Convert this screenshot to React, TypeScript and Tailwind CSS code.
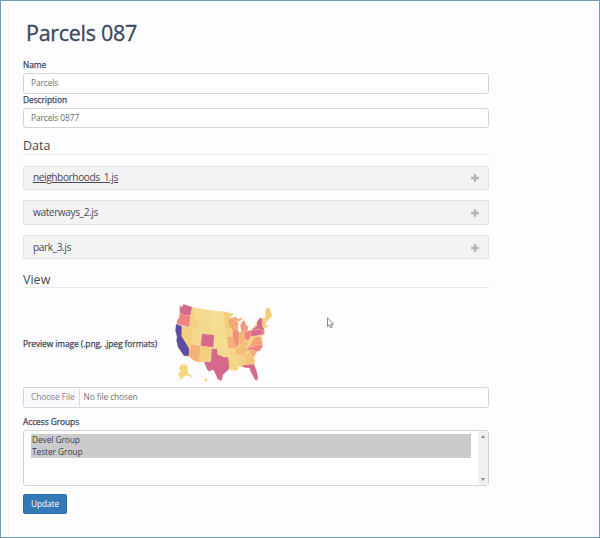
import React from "react";

const shapes: { fill: string; points: string }[] = [
  // Mainland base
  { fill: "#f4d98c", points: "82,37 130,45 180,51 186,49 189,54 206,57 196,66 200,69 211,66 220,73 204,80 206,98 210,109 222,112 238,110 250,108 262,102 276,82 285,70 292,70 302,67 301,52 305,39 313,38 318,55 321,63 311,73 304,80 302,94 311,93 300,99 294,107 290,122 293,138 292,153 282,166 270,179 268,194 269,211 238,211 215,216 218,226 204,224 193,222 140,202 106,201 92,198 72,184 60,150 50,122 50,100 74,98" },
  // Washington, Oregon, California
  { fill: "#d5698b", points: "44,30 50,37 55,30 54,27 82,36 77,61 56,61 44,53" },
  { fill: "#ee8481", points: "44,54 56,61 77,61 73,97 35,87 37,75 43,65" },
  { fill: "#5c4ca2", points: "33,87 54,94 50,123 72,160 73,172 71,184 56,182 49,171 39,157 34,136 36,126 31,107" },
  // Idaho, Montana, Wyoming
  { fill: "#f4cf7e", points: "82,37 86,38 86,52 95,77 105,79 102,104 73,97 77,61" },
  { fill: "#f3da90", points: "86,38 140,47 136,81 95,77 86,52" },
  { fill: "#efda8f", points: "105,79 141,83 138,116 102,112" },
  // Nevada, Utah, Arizona, New Mexico, Colorado
  { fill: "#f5cf81", points: "50,92 87,101 81,147 75,158 50,123" },
  { fill: "#f4d98d", points: "87,101 102,104 102,114 111,116 107,153 80,147" },
  { fill: "#f4b278", points: "80,147 107,153 103,202 89,198 71,185 75,160" },
  { fill: "#f5ce82", points: "107,153 141,157 138,199 103,202" },
  { fill: "#d5698b", points: "111,116 148,120 145,157 107,152" },
  // Dakotas to Oklahoma
  { fill: "#f2e095", points: "139,47 176,50 178,79 137,77" },
  { fill: "#f2df92", points: "137,77 178,79 180,106 139,101" },
  { fill: "#f3dc8c", points: "139,101 179,106 187,128 148,128 148,116 138,115" },
  { fill: "#f5dd90", points: "148,128 187,128 190,155 147,155" },
  { fill: "#f5da91", points: "142,156 190,156 191,186 174,184 157,176 157,161 142,160" },
  { fill: "#d5698b", points: "140,161 157,162 157,178 176,186 190,187 195,215 192,223 174,239 170,258 158,253 154,243 146,226 139,225 133,230 126,223 117,201 138,200" },
  // Minnesota to Louisiana
  { fill: "#f4cd7c", points: "176,50 206,57 196,66 190,74 191,88 204,101 180,101" },
  { fill: "#f5d18a", points: "180,101 204,101 211,113 202,126 184,125" },
  { fill: "#f4b176", points: "185,125 204,125 208,140 217,155 214,162 190,158" },
  { fill: "#f5d78b", points: "190,158 214,161 209,191 191,188" },
  { fill: "#f4d682", points: "191,188 209,191 208,207 217,211 221,223 208,227 193,222" },
  { fill: "#f5d587", points: "209,181 221,180 221,216 208,208" },
  { fill: "#f4d182", points: "221,178 238,177 243,209 225,217 221,209" },
  { fill: "#f6c379", points: "238,177 253,174 269,195 266,211 242,209" },
  // Great Lakes states
  { fill: "#f2a777", points: "190,72 200,69 212,77 220,83 218,105 203,106 191,88" },
  { fill: "#f2a777", points: "200,69 212,66 220,73 230,68 230,74 218,80" },
  { fill: "#ee927a", points: "204,105 218,105 223,113 222,149 215,156 205,137 203,124" },
  { fill: "#f19780", points: "233,77 240,78 243,91 250,94 247,108 229,112 226,91" },
  { fill: "#f4b278", points: "223,112 238,110 238,141 224,151" },
  { fill: "#ee837f", points: "238,111 257,106 259,120 252,135 242,136 238,127" },
  { fill: "#f5bf7a", points: "216,157 225,149 239,138 252,137 250,150 239,160 213,164" },
  { fill: "#f4bc77", points: "212,163 250,156 246,169 238,176 210,181" },
  { fill: "#f3d687", points: "251,139 260,122 273,128 258,149" },
  // Atlantic coast
  { fill: "#f3a17c", points: "248,157 256,149 263,137 272,125 286,126 293,148 249,158" },
  { fill: "#ee8481", points: "245,168 251,158 292,148 292,156 284,167 273,170 261,164" },
  { fill: "#f3ae7c", points: "253,169 264,165 275,170 269,182 262,185" },
  { fill: "#d5698b", points: "257,107 275,105 288,101 293,108 289,119 259,124" },
  { fill: "#d5698b", points: "263,102 276,92 276,82 283,70 292,69 293,96 298,102 293,107 285,101 258,107" },
  { fill: "#ee8181", points: "289,106 298,106 299,115 291,123" },
  { fill: "#f4d180", points: "291,72 302,69 301,90 311,93 299,98 293,96" },
  { fill: "#f4cd7c", points: "302,66 302,52 305,39 313,38 318,54 321,63 310,74 306,81" },
  { fill: "#d5698b", points: "231,211 267,208 274,225 279,245 277,256 270,254 258,232 253,219 242,218 234,216" },
  // Alaska and Hawaii
  { fill: "#f4d680", points: "47,211 58,208 68,212 69,236 77,240 84,248 70,242 62,241 50,251 38,257 49,247 42,245 40,235 48,229 42,221" },
  { fill: "#f4d680", points: "119,249 126,252 127,257 121,260 118,254" },
  { fill: "#f4d680", points: "102,237 106,239 104,241" },
  { fill: "#f4d680", points: "110,242 115,244 112,246" },
];

function StatesMap() {
  return (
    <svg className="block h-[95px] w-[120px]" viewBox="0 0 360 285">
      {shapes.map((s) => (
        <polygon
          key={s.points}
          points={s.points}
          fill={s.fill}
          stroke="#fbe3ae"
          strokeOpacity={0.45}
          strokeWidth={1}
        />
      ))}
    </svg>
  );
}

function Panel({ name, className }: { name: string; className: string }) {
  return (
    <div
      className={`flex items-center justify-between rounded-[2px] border border-[#e3e2e5] bg-[#f3f2f5] pr-[9px] pl-[9px] text-[10.2px] tracking-[-0.44px] text-[#4a4a4e] ${className}`}
    >
      <span>{name}</span>
      <svg className="size-2" viewBox="0 0 8 8">
        <path d="M2.7 0.2h2.6v2.5h2.6v2.6H5.3v2.5H2.7V5.3H0.1V2.7h2.6z" fill="#b4b3b6" />
      </svg>
    </div>
  );
}

const label =
  "text-[8.4px] leading-3 font-normal tracking-[-0.07px] text-[#3d4862] [-webkit-text-stroke:0.25px_#3d4862]";
const field =
  "block w-full rounded-[3px] border border-[#d4d3d8] bg-white px-[7px] text-[8.4px] tracking-[-0.1px] text-[#6c6c70] outline-none";
const heading =
  "border-b border-[#e8e7ea] text-[12.5px] font-normal text-[#4b4b50]";

export default function App() {
  return (
    <div className="relative flex h-[538px] w-[600px] border border-[#6f9fb3] bg-[#fdfcfe] pt-[9px] pl-[7px] font-['Open_Sans','Noto_Sans',sans-serif]">
      <main className="flex-1 border-l border-[#f1f0f3] pl-[14px]">
        <div className="w-[466px]">
          <h1 className="h-12 pt-[8px] pl-[3px] text-[21.5px] leading-[30px] tracking-[-0.3px] text-[#3b4762] [-webkit-text-stroke:0.3px_#3b4762]">
            Parcels 087
          </h1>
          <div className={`${label} h-[15px] pt-px`}>Name</div>
          <input className={`${field} h-[21px] pb-[2px]`} defaultValue="Parcels" />
          <div className={`${label} h-[14px]`}>Description</div>
          <input className={`${field} h-[20px] pb-px`} defaultValue="Parcels 0877" />
          <h2 className={`${heading} mt-2 h-[19px] leading-[19px]`}>Data</h2>
          <Panel name="neighborhoods_1.js" className="mt-[11px] h-6 underline" />
          <Panel name="waterways_2.js" className="mt-[10px] h-[25px]" />
          <Panel name="park_3.js" className="mt-[10px] h-6 pt-px" />
          <h2 className={`${heading} mt-[11px] h-[18px] leading-5`}>View</h2>
          <div className="mt-[7px] flex h-[92px] items-center overflow-visible">
            <div className={`${label} w-[142px] pt-[5px] whitespace-nowrap`}>
              Preview image (.png, .jpeg formats)
            </div>
            <div className="h-[92px]">
              <StatesMap />
            </div>
          </div>
          <div className={`${field} flex h-[21px] items-center`}>
            <span className="-ml-[6px] flex h-[17px] items-center border-r border-[#dad9df] bg-[#f9f8fc] pr-[4px] pl-[6px] text-[#85858e]">
              Choose File
            </span>
            <span className="ml-[4px] text-[#707074]">No file chosen</span>
          </div>
          <div className={`${label} mt-[8px] h-[14px]`}>Access Groups</div>
          <div className="flex h-14 justify-between rounded-[3px] border border-[#d4d3d8] bg-white pl-[7px]">
            <div className="mt-[3px] h-6 w-[440px] bg-[#cccacd] pl-px text-[8.4px] leading-3 tracking-[-0.08px] text-[#3e3e42]">
              <div>Devel Group</div>
              <div>Tester Group</div>
            </div>
            <div className="flex w-[10px] flex-col items-center justify-between bg-[#f0eff2] py-1">
              <svg className="h-[3px] w-1" viewBox="0 0 4 3">
                <path d="M0 3L2 0L4 3z" fill="#858588" />
              </svg>
              <svg className="h-[3px] w-1" viewBox="0 0 4 3">
                <path d="M0 0L2 3L4 0z" fill="#858588" />
              </svg>
            </div>
          </div>
          <button className="mt-2 block h-5 w-[44px] rounded-[2px] border border-[#2d6da4] bg-[#3379b7] text-[8.4px] leading-[18px] tracking-[-0.08px] text-white">
            Update
          </button>
        </div>
      </main>
      <svg
        className="absolute top-[316px] left-[326px] h-3 w-[7px]"
        viewBox="0 0 7 12"
      >
        <path
          d="M0.5 0.8v8.7l1.9-1.8 1.3 3 1.4-.6-1.3-2.9h2.7z"
          fill="#fff"
          stroke="#6c6c70"
          strokeWidth={0.8}
        />
      </svg>
    </div>
  );
}
